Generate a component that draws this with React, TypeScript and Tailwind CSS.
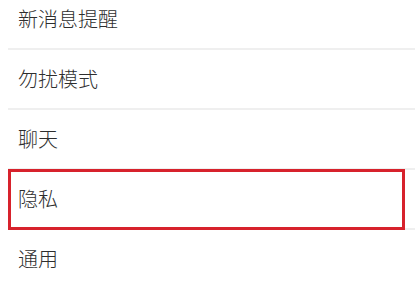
const items = ['新消息提醒', '勿扰模式', '聊天', '隐私', '通用'];

export default function App() {
  return (
    <div
      className="h-[284px] w-[415px] overflow-hidden bg-white"
      style={{ fontFamily: '"Noto Sans CJK SC", "Noto Sans", sans-serif' }}
    >
      <ul className="-mt-[10px]">
        {items.map((label) => (
          <li key={label} className="relative ml-2 flex h-[60px] items-center border-b-2 border-[#efefef]">
            <span className="pl-[10px] text-[20px] font-light leading-none text-[#2e2e2e]">{label}</span>
            {label === '隐私' && (
              <div className="pointer-events-none absolute -top-[1px] left-0 right-[10px] h-[61px] border-[3px] border-[#d7222c]" />
            )}
          </li>
        ))}
      </ul>
    </div>
  );
}
